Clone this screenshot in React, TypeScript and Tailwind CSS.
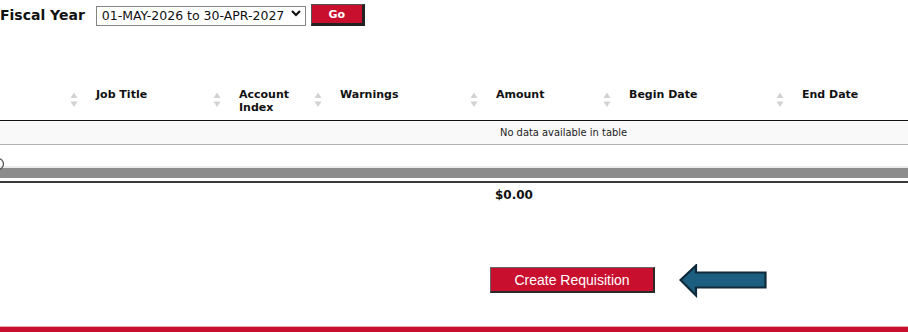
import React from "react";

const cols = [
    { label: "" },
    { label: "Job Title" },
    { label: "Account Index" },
    { label: "Warnings" },
    { label: "Amount" },
    { label: "Begin Date" },
    { label: "End Date" },
];

function SortIcon() {
    return (
        <svg width="8" height="16" viewBox="0 0 8 16" className="shrink-0 mt-[4px]">
            <path d="M4 0.5 L7.5 6 L0.5 6 Z" fill="#d2d2d2" />
            <path d="M0.5 9.5 L7.5 9.5 L4 15 Z" fill="#d2d2d2" />
        </svg>
    );
}

function ArrowLeft() {
    return (
        <svg width="90" height="34" viewBox="0 0 90 34">
            <path
                d="M1.5 16 L17 1.5 L17 8.5 L86.5 8.5 L86.5 23.5 L17 23.5 L17 31.5 Z"
                fill="#1b5e80"
                stroke="#0e2a3a"
                strokeWidth="2.2"
                strokeLinejoin="miter"
            />
        </svg>
    );
}

export default function App() {
    return (
        <div className="w-[908px] h-[332px] bg-white overflow-hidden flex flex-col font-['DejaVu_Sans',sans-serif] text-[#111]">
            {/* Fiscal year picker */}
            <div className="flex items-center h-[30px]">
                <span className="text-[14px] font-bold leading-none">Fiscal Year</span>
                <div className="relative ml-[11px]">
                    <select
                        defaultValue="2026"
                        className="appearance-none w-[210px] h-[20px] border border-[#858585] bg-white pl-[5px] text-[12.5px] leading-[18px] text-[#111] outline-none"
                    >
                        <option value="2026">01-MAY-2026 to 30-APR-2027</option>
                    </select>
                    <svg
                        width="10"
                        height="7"
                        viewBox="0 0 10 7"
                        className="absolute right-[5px] top-[7px] pointer-events-none"
                    >
                        <path d="M1 1 L5 5 L9 1" fill="none" stroke="#111" strokeWidth="2.2" />
                    </svg>
                </div>
                <button
                    type="button"
                    className="ml-[5px] w-[54px] h-[22px] bg-[#c8102e] border border-[#555] border-r-[3px] border-b-[3px] border-r-[#222] border-b-[#222] text-white text-[11px] font-bold leading-none"
                >
                    Go
                </button>
            </div>

            {/* Table header */}
            <div className="mt-[50px] grid grid-cols-[86px_143px_101px_156px_133px_173px_116px] border-b border-[#111]">
                {cols.map((c, i) => (
                    <div key={i} className="flex items-start justify-between pl-[10px] pr-[8px] pt-[8px] pb-[6px]">
                        <span className="text-[11px] font-bold leading-[13px] w-[64px] whitespace-normal">
                            {c.label === "Account Index" ? (
                                <>
                                    Account
                                    <br />
                                    Index
                                </>
                            ) : (
                                <span className="whitespace-nowrap">{c.label}</span>
                            )}
                        </span>
                        {i < cols.length - 1 && <SortIcon />}
                    </div>
                ))}
            </div>

            {/* Empty body row */}
            <div className="h-[24px] bg-[#f9f9f9] border-b border-[#b0b0b0] flex items-center pt-[2px] pl-[500px]">
                <span className="font-['DejaVu_Sans_Condensed',sans-serif] text-[11px] text-[#222]">
                    No data available in table
                </span>
            </div>

            {/* Horizontal scroller */}
            <div className="relative h-[21px]">
                <svg width="8" height="14" viewBox="0 0 8 14" className="absolute left-0 top-[12px]">
                    <circle cx="-2" cy="7" r="5.5" fill="none" stroke="#555" strokeWidth="1.3" />
                </svg>
            </div>
            <div className="h-[2px] bg-[#ececec]" />
            <div className="h-[10px] bg-[#8c8c8c]" />
            <div className="h-[3px] bg-white" />
            <div className="h-[2px] bg-[#3a3a3a]" />

            {/* Footer total */}
            <div className="grid grid-cols-[86px_143px_101px_156px_133px_173px_116px] pt-[5px]">
                <div />
                <div />
                <div />
                <div />
                <div className="pl-[9px] text-[12px] font-bold leading-[14px]">$0.00</div>
                <div />
                <div />
            </div>

            {/* Action */}
            <div className="mt-[60px] flex items-center pl-[490px]">
                <button
                    type="button"
                    className="w-[165px] h-[26px] bg-[#c8102e] border border-[#666] border-r-2 border-b-2 border-r-[#2a2a2a] border-b-[#2a2a2a] text-white text-[14px] leading-none font-['Liberation_Sans',Arial,sans-serif]"
                >
                    Create Requisition
                </button>
                <div className="ml-[24px] mt-[2px]">
                    <ArrowLeft />
                </div>
            </div>

            <div className="mt-auto border-t border-[#eaa8b2] h-[6px] bg-[#c8102e]" />
        </div>
    );
}
